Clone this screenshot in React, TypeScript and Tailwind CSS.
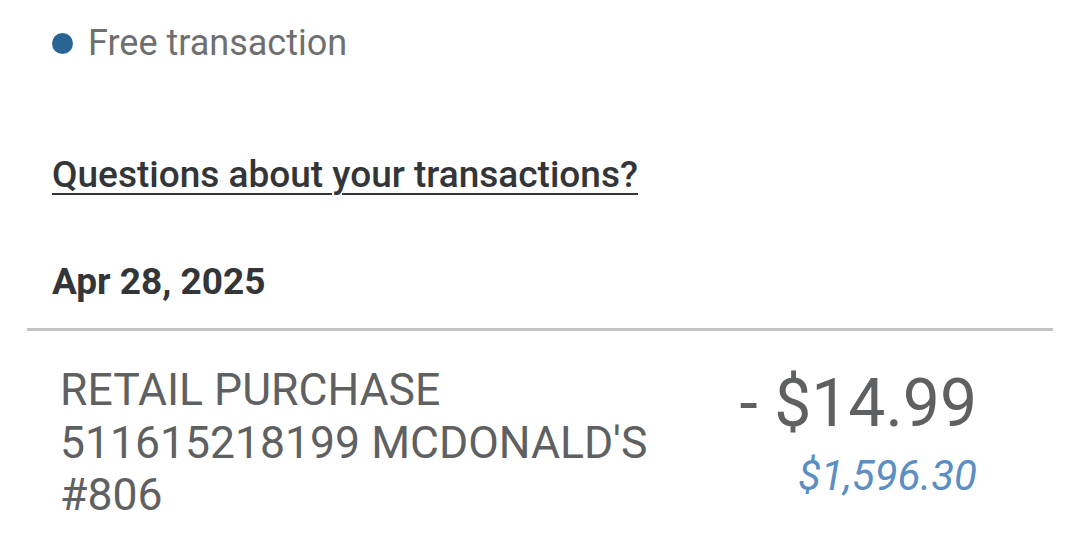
export default function App() {
  return (
    <div className="w-[1080px] h-[547px] overflow-hidden bg-white font-['Roboto',sans-serif]">
      <div className="pl-[52px] pt-[23px] flex items-center gap-[15px]">
        <span className="w-[21px] h-[21px] rounded-full bg-[#2a6493] shrink-0" />
        <span className="text-[36px] leading-[40px] text-[#6f6f6f]">Free transaction</span>
      </div>

      <div className="pl-[52px] pt-[92px]">
        <a className="text-[37px] leading-[40px] font-medium text-[#333538] underline decoration-2 underline-offset-[6px]">
          Questions about your transactions?
        </a>
      </div>

      <div className="pl-[52px] pt-[67px] pb-[26px]">
        <h2 className="text-[37px] leading-[40px] font-bold text-[#333538]">Apr 28, 2025</h2>
      </div>

      <div className="mx-[27px] h-[3px] bg-[#c4c4c4]" />

      <div className="flex justify-between pl-[60px] pr-[103px] pt-[33px]">
        <div className="text-[44.5px] leading-[52.5px] text-[#5f6062]">
          <div>RETAIL PURCHASE</div>
          <div>511615218199 MCDONALD'S</div>
          <div>#806</div>
        </div>
        <div className="flex flex-col items-end pt-[4px]">
          <span className="text-[66px] leading-[72px] text-[#5f6062]">- $14.99</span>
          <span className="text-[42px] leading-[48px] italic text-[#5b8ec2] mt-[12px]">$1,596.30</span>
        </div>
      </div>
    </div>
  );
}
